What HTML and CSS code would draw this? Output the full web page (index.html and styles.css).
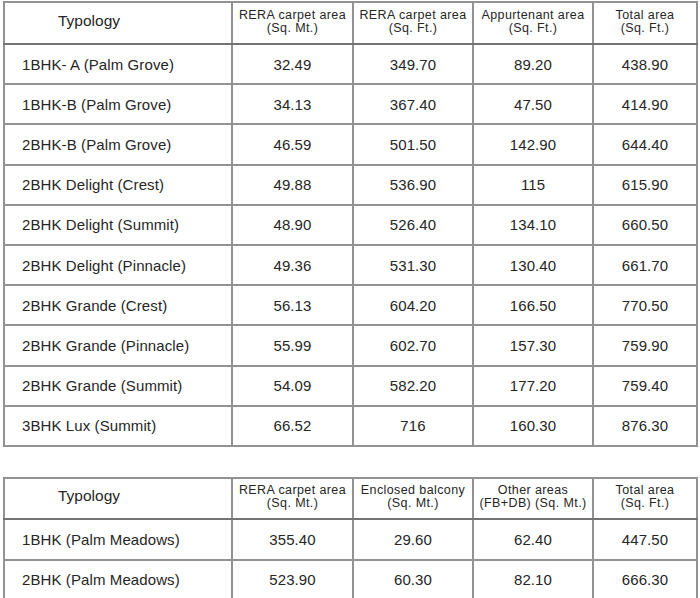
FILE: index.html
```html
<!DOCTYPE html>
<html>
<head>
<meta charset="utf-8">
<link rel="stylesheet" href="styles.css">
</head>
<body>
<div class="page">
<table class="grid first">
  <colgroup>
    <col class="c1"><col class="c2"><col class="c3"><col class="c4"><col class="c5">
  </colgroup>
  <thead>
    <tr>
      <th class="typ">Typology</th>
      <th>RERA carpet area<br>(Sq. Mt.)</th>
      <th>RERA carpet area<br>(Sq. Ft.)</th>
      <th>Appurtenant area<br>(Sq. Ft.)</th>
      <th>Total area<br>(Sq. Ft.)</th>
    </tr>
  </thead>
  <tbody>
    <tr><td class="name">1BHK- A (Palm Grove)</td><td>32.49</td><td>349.70</td><td>89.20</td><td>438.90</td></tr>
    <tr><td class="name">1BHK-B (Palm Grove)</td><td>34.13</td><td>367.40</td><td>47.50</td><td>414.90</td></tr>
    <tr><td class="name">2BHK-B (Palm Grove)</td><td>46.59</td><td>501.50</td><td>142.90</td><td>644.40</td></tr>
    <tr><td class="name">2BHK Delight (Crest)</td><td>49.88</td><td>536.90</td><td>115</td><td>615.90</td></tr>
    <tr><td class="name">2BHK Delight (Summit)</td><td>48.90</td><td>526.40</td><td>134.10</td><td>660.50</td></tr>
    <tr><td class="name">2BHK Delight (Pinnacle)</td><td>49.36</td><td>531.30</td><td>130.40</td><td>661.70</td></tr>
    <tr><td class="name">2BHK Grande (Crest)</td><td>56.13</td><td>604.20</td><td>166.50</td><td>770.50</td></tr>
    <tr><td class="name">2BHK Grande (Pinnacle)</td><td>55.99</td><td>602.70</td><td>157.30</td><td>759.90</td></tr>
    <tr><td class="name">2BHK Grande (Summit)</td><td>54.09</td><td>582.20</td><td>177.20</td><td>759.40</td></tr>
    <tr><td class="name">3BHK Lux (Summit)</td><td>66.52</td><td>716</td><td>160.30</td><td>876.30</td></tr>
  </tbody>
</table>

<table class="grid second">
  <colgroup>
    <col class="c1"><col class="c2"><col class="c3"><col class="c4"><col class="c5">
  </colgroup>
  <thead>
    <tr>
      <th class="typ">Typology</th>
      <th>RERA carpet area<br>(Sq. Mt.)</th>
      <th>Enclosed balcony<br>(Sq. Mt.)</th>
      <th>Other areas<br>(FB+DB) (Sq. Mt.)</th>
      <th>Total area<br>(Sq. Ft.)</th>
    </tr>
  </thead>
  <tbody>
    <tr><td class="name">1BHK (Palm Meadows)</td><td>355.40</td><td>29.60</td><td>62.40</td><td>447.50</td></tr>
    <tr><td class="name">2BHK (Palm Meadows)</td><td>523.90</td><td>60.30</td><td>82.10</td><td>666.30</td></tr>
  </tbody>
</table>
</div>
</body>
</html>
```

FILE: styles.css
```css
html, body {
  margin: 0;
  padding: 0;
  background: #ffffff;
}

.page {
  padding: 1px 0 0 3px;
  display: flex;
  flex-direction: column;
  gap: 30px;
}

.grid {
  border-collapse: collapse;
  table-layout: fixed;
  width: 694px;
  font-family: "Liberation Sans", Arial, sans-serif;
  color: #262626;
  border: 2px solid #6a6a6a;
}

.c1 { width: 228px; }
.c2 { width: 121px; }
.c3 { width: 120px; }
.c4 { width: 120px; }
.c5 { width: 104px; }

.grid th,
.grid td {
  border: 2px solid #929292;
  padding: 0;
  text-align: center;
  vertical-align: middle;
}

.grid thead th {
  height: 38px;
  font-weight: normal;
  font-size: 12.5px;
  line-height: 13px;
  letter-spacing: 0.4px;
  border-bottom: 2px solid #737373;
  padding-bottom: 2px;
}

.grid thead th.typ {
  height: 35px;
  font-size: 15.5px;
  line-height: 18px;
  text-align: left;
  padding-left: 53px;
  padding-bottom: 5px;
  letter-spacing: 0;
}

.second thead th {
  height: 37px;
}

.second thead th.typ {
  height: 34px;
}

.grid tbody td {
  height: 38.2px;
  font-size: 15px;
  letter-spacing: 0.1px;
}

.grid tbody td.name {
  text-align: left;
  padding-left: 17px;
}

.second tbody tr:first-child td {
  height: 39.5px;
}

.second tbody tr:last-child td {
  height: 37px;
  padding-bottom: 2px;
}
```
